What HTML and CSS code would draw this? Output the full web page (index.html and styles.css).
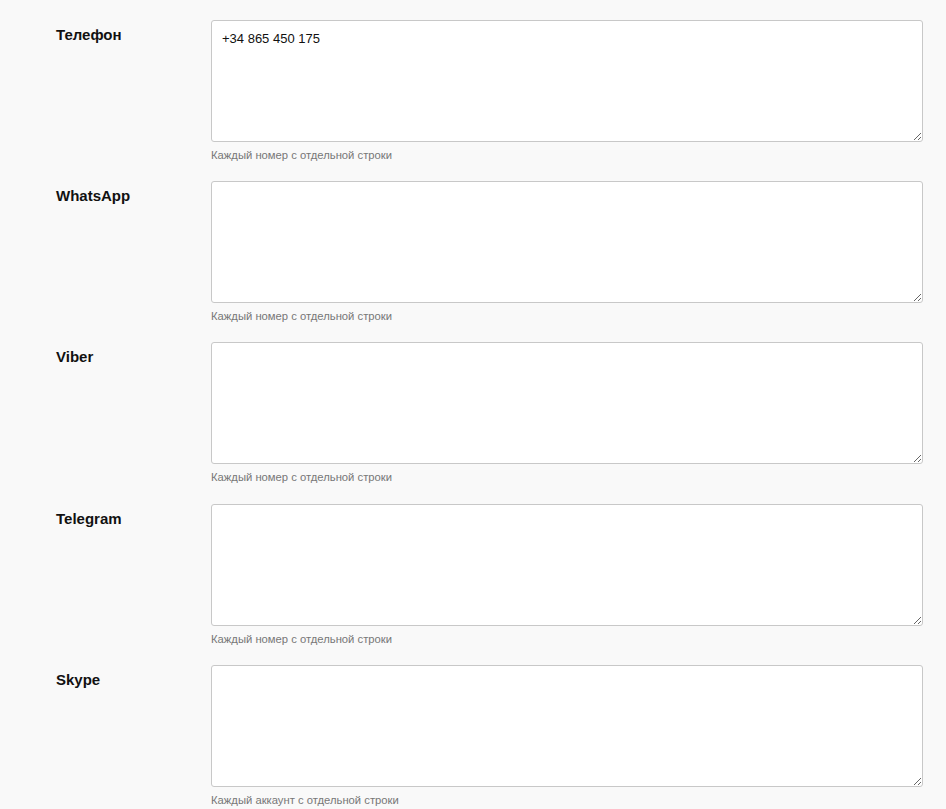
FILE: index.html
```html
<!DOCTYPE html>
<html lang="ru">
<head>
<meta charset="utf-8">
<title>Контакты</title>
<link rel="stylesheet" href="styles.css">
</head>
<body>
<div class="form">
  <div class="row">
    <label class="label" for="f1">Телефон</label>
    <div class="field">
      <textarea id="f1" class="input">+34 865 450 175</textarea>
      <div class="hint">Каждый номер с отдельной строки</div>
    </div>
  </div>
  <div class="row">
    <label class="label" for="f2">WhatsApp</label>
    <div class="field">
      <textarea id="f2" class="input"></textarea>
      <div class="hint">Каждый номер с отдельной строки</div>
    </div>
  </div>
  <div class="row">
    <label class="label" for="f3">Viber</label>
    <div class="field">
      <textarea id="f3" class="input"></textarea>
      <div class="hint">Каждый номер с отдельной строки</div>
    </div>
  </div>
  <div class="row">
    <label class="label" for="f4">Telegram</label>
    <div class="field">
      <textarea id="f4" class="input"></textarea>
      <div class="hint">Каждый номер с отдельной строки</div>
    </div>
  </div>
  <div class="row">
    <label class="label" for="f5">Skype</label>
    <div class="field">
      <textarea id="f5" class="input"></textarea>
      <div class="hint">Каждый аккаунт с отдельной строки</div>
    </div>
  </div>
</div>
</body>
</html>
```
FILE: styles.css
```css
html, body {
  margin: 0;
  padding: 0;
  background: #f9f9f9;
}
body {
  font-family: "Liberation Sans", Arial, sans-serif;
  color: #111;
}
.form {
  display: flex;
  flex-direction: column;
  gap: 18.2px;
  padding: 20px 0 0 56px;
}
.row {
  display: flex;
  align-items: flex-start;
}
.label {
  width: 155px;
  flex: none;
  font-size: 15px;
  font-weight: bold;
  line-height: 20px;
  padding-top: 5px;
  color: #111;
}
.field {
  display: flex;
  flex-direction: column;
}
.input {
  box-sizing: border-box;
  width: 712px;
  height: 122px;
  margin: 0;
  padding: 9px 10px;
  border: 1px solid #c8c8c8;
  border-radius: 3px;
  background: #fff;
  font-family: "Liberation Sans", Arial, sans-serif;
  font-size: 13px;
  line-height: 18px;
  color: #111;
  resize: both;
}
.hint {
  margin-top: 5px;
  font-size: 11.25px;
  line-height: 16px;
  color: #777;
}
```
